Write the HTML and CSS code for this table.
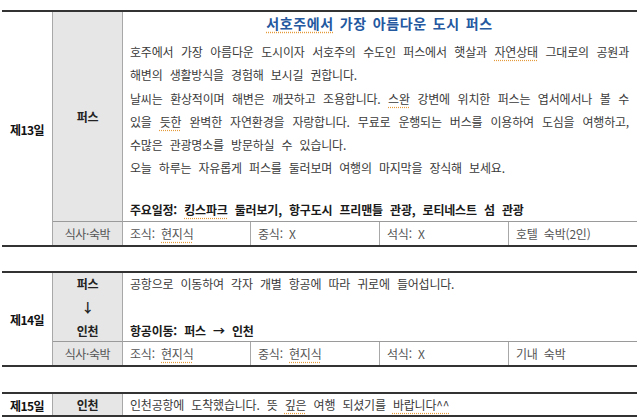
FILE: index.html
```html
<!DOCTYPE html>
<html lang="ko">
<head>
<meta charset="utf-8">
<title>일정표</title>
<link rel="stylesheet" href="styles.css">
</head>
<body>
<section class="day day13">
  <div class="cell label">제13일</div>
  <div class="cell city top">퍼스</div>
  <div class="cell content">
    <h2 class="title"><span class="sp">서호주에서</span> 가장 아름다운 도시 퍼스</h2>
    <p class="line first j">호주에서 가장 아름다운 도시이자 서호주의 수도인 퍼스에서 햇살과 <span class="sp">자연상태</span> 그대로의 공원과</p>
    <p class="line">해변의 생활방식을 경험해 보시길 권합니다.</p>
    <p class="line j">날씨는 환상적이며 해변은 깨끗하고 조용합니다. <span class="sp">스완</span> 강변에 위치한 퍼스는 엽서에서나 볼 수</p>
    <p class="line j">있을 <span class="sp">듯한</span> 완벽한 자연환경을 자랑합니다. 무료로 운행되는 버스를 이용하여 도심을 여행하고,</p>
    <p class="line">수많은 관광명소를 방문하실 수 있습니다.</p>
    <p class="line">오늘 하루는 자유롭게 퍼스를 둘러보며 여행의 마지막을 장식해 보세요.</p>
    <p class="line key">주요일정: <span class="sp">킹스파크</span> 둘러보기, 항구도시 프리맨틀 관광, 로티네스트 섬 관광</p>
  </div>
  <div class="cell city meal-label">식사·숙박</div>
  <div class="cell meal">조식: <span class="sp">현지식</span></div>
  <div class="cell meal">중식: X</div>
  <div class="cell meal">석식: X</div>
  <div class="cell meal last">호텔 숙박(2인)</div>
</section>

<section class="day day14">
  <div class="cell label">제14일</div>
  <div class="cell city top route">
    <span class="stop">퍼스</span>
    <span class="stop arrow">↓</span>
    <span class="stop">인천</span>
  </div>
  <div class="cell content centered">
    <p class="line">공항으로 이동하여 각자 개별 항공에 따라 귀로에 들어섭니다.</p>
    <p class="line">&nbsp;</p>
    <p class="line key">항공이동: 퍼스 → 인천</p>
  </div>
  <div class="cell city meal-label">식사·숙박</div>
  <div class="cell meal">조식: <span class="sp">현지식</span></div>
  <div class="cell meal">중식: <span class="sp">현지식</span></div>
  <div class="cell meal">석식: X</div>
  <div class="cell meal last">기내 숙박</div>
</section>

<section class="day day15">
  <div class="cell label">제15일</div>
  <div class="cell city">인천</div>
  <div class="cell content single"><p class="line">인천공항에 도착했습니다. 뜻 <span class="sp">깊은</span> 여행 되셨기를 <span class="sp">바랍니다^^</span></p></div>
</section>
</body>
</html>
```

FILE: styles.css
```css
* {
  box-sizing: border-box;
}

body {
  margin: 10px 0 0 2px;
  background: #ffffff;
  font-family: "Noto Sans CJK KR", "Noto Sans", sans-serif;
  font-size: 12px;
  color: #3a3a3a;
}

.day {
  display: grid;
  grid-template-columns: 51px 70px 128px 129px 129px 128px;
  width: 635px;
  border-top: 2px solid #333333;
  border-bottom: 2px solid #333333;
}

.day13 {
  grid-template-rows: 210px 23px;
}

.day14 {
  margin-top: 24px;
  grid-template-rows: 69px 23px;
}

.day15 {
  margin-top: 25px;
  grid-template-rows: 21px;
}

.cell {
  min-width: 0;
  overflow: hidden;
}

.label {
  grid-row: span 2;
  border-right: 1px solid #a8a8a8;
  display: flex;
  align-items: center;
  justify-content: center;
  font-weight: 700;
  color: #111111;
  letter-spacing: -0.6px;
  padding-top: 1px;
}

.day15 .label {
  grid-row: span 1;
}

.city {
  background: #e6e6e6;
  border-right: 1px solid #a8a8a8;
  display: flex;
  align-items: center;
  justify-content: center;
  font-weight: 700;
  color: #222222;
  letter-spacing: -0.4px;
}

.city.top {
  border-bottom: 1px solid #9a9a9a;
}

.route {
  flex-direction: column;
}

.stop {
  display: block;
  line-height: 23.5px;
}

.arrow {
  font-size: 13px;
}

.meal-label {
  font-weight: 400;
  color: #555555;
}

.content {
  grid-column: span 4;
  border-bottom: 1px solid #9a9a9a;
  padding: 0 8px 0 7px;
  letter-spacing: -0.2px;
  word-spacing: 4px;
}

.day15 .content {
  border-bottom: none;
}

.centered {
  display: flex;
  flex-direction: column;
  justify-content: center;
}

.single {
  display: flex;
  align-items: center;
}

.single .line {
  line-height: 21px;
}

.title {
  margin: 0;
  text-align: center;
  font-size: 14px;
  line-height: 22px;
  font-weight: 700;
  color: #24589f;
  letter-spacing: 0.6px;
  word-spacing: 1.5px;
}

.line {
  margin: 0;
  line-height: 23.3px;
  white-space: nowrap;
}

.line.first {
  margin-top: 6px;
}

.line.j {
  text-align: justify;
  text-align-last: justify;
  white-space: normal;
}

.day14 .line {
  line-height: 23.5px;
}

.key {
  font-weight: 700;
  color: #1a1a1a;
}

.day13 .key {
  margin-top: 18.5px;
}

.meal {
  border-right: 1px solid #a8a8a8;
  padding-left: 7px;
  line-height: 23px;
  color: #555555;
  letter-spacing: -0.2px;
  word-spacing: 3px;
}

.meal.last {
  border-right: none;
}

.sp {
  text-decoration: underline dotted #e59a3a;
  text-underline-offset: 3px;
}
```
